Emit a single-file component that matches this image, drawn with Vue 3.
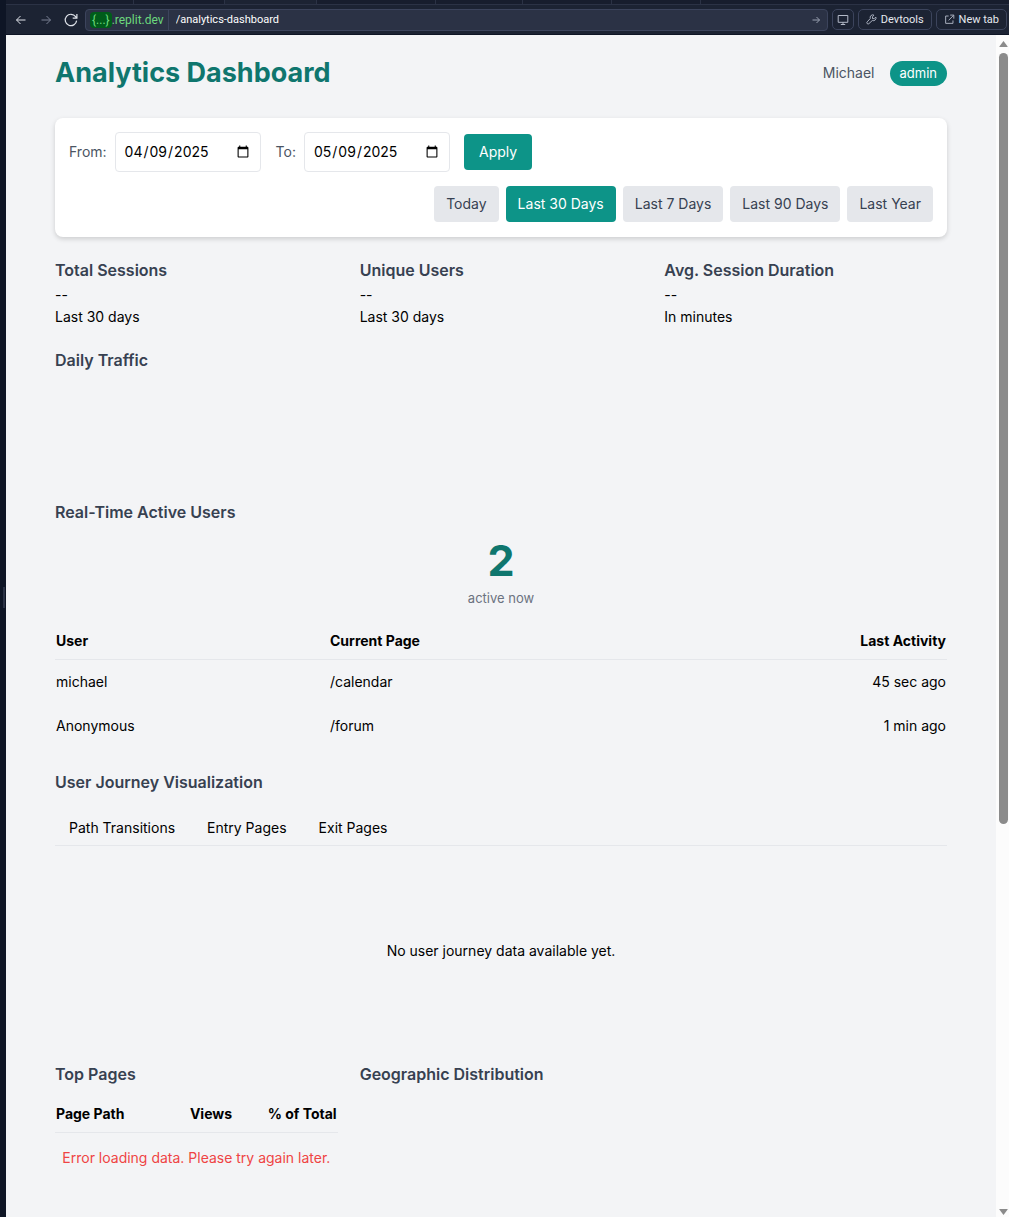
<script setup>
import { ref } from 'vue'

const from = ref('2025-04-09')
const to = ref('2025-05-09')
const ranges = ['Today', 'Last 30 Days', 'Last 7 Days', 'Last 90 Days', 'Last Year']
const activeRange = ref('Last 30 Days')
const stats = [
  { title: 'Total Sessions', value: '--', note: 'Last 30 days' },
  { title: 'Unique Users', value: '--', note: 'Last 30 days' },
  { title: 'Avg. Session Duration', value: '--', note: 'In minutes' }
]
const users = [
  { name: 'michael', page: '/calendar', last: '45 sec ago' },
  { name: 'Anonymous', page: '/forum', last: '1 min ago' }
]
const journeyTabs = ['Path Transitions', 'Entry Pages', 'Exit Pages']
const path = ref('/analytics-dashboard')
const browserTabs = [128, 91, 92, 119, 87, 89, 89]
</script>

<template>
  <div class="shell">
    <div class="rail"><span class="grip"></span></div>
    <div class="window">
      <div class="tabstrip">
        <i v-for="(w, n) in browserTabs" :key="n" :class="{ current: n === 2 }" :style="{ width: w + 'px' }"></i>
      </div>
      <div class="toolbar">
        <button class="nav" aria-label="Back">
          <svg width="12" height="12" viewBox="0 0 12 12"><path d="M10.5 6H1.5M5.5 2L1.5 6l4 4" /></svg>
        </button>
        <button class="nav dim" aria-label="Forward">
          <svg width="12" height="12" viewBox="0 0 12 12"><path d="M1.5 6h9M6.5 2l4 4-4 4" /></svg>
        </button>
        <button class="nav reload" aria-label="Reload">
          <svg width="14" height="14" viewBox="0 0 14 14"><path d="M12.6 7.6A5.7 5.7 0 1 1 11.6 3.7L12.8 5M12.9 1v4.2H8.7" /></svg>
        </button>
        <div class="address">
          <button class="host"><span class="chip">{...}</span>.replit.dev</button>
          <input v-model="path" class="path" aria-label="Path" />
          <button class="go" aria-label="Go">
            <svg width="8" height="8" viewBox="0 0 8 8"><path d="M.5 4h7M4.5 1l3 3-3 3" /></svg>
          </button>
        </div>
        <button class="tool" aria-label="Device size">
          <svg width="12" height="12" viewBox="0 0 12 12"><path d="M1.2 1.5h9.6v6.8H1.2zM6 8.3v2.2M3.8 10.5h4.4" /></svg>
        </button>
        <button class="tool">
          <svg width="11" height="11" viewBox="0 0 12 12"><path d="M8.6 1.2a2.9 2.9 0 0 0-3.9 3.7L1.3 8.6a1.3 1.3 0 0 0 1.9 1.9l3.7-3.4a2.9 2.9 0 0 0 3.8-3.8L9 5H7.1V3.1z" /></svg>
          Devtools
        </button>
        <button class="tool">
          <svg width="11" height="11" viewBox="0 0 12 12"><path d="M5 2.2H1.8v8h8V7M6.8 1.2h3.9v3.9M10.5 1.4L5 6.9" /></svg>
          New tab
        </button>
      </div>

      <div class="viewport">
        <main class="page">
          <header class="head">
            <h1>Analytics Dashboard</h1>
            <div class="account">
              <span class="who">Michael</span>
              <span class="role">admin</span>
            </div>
          </header>

          <form class="filters" @submit.prevent>
            <div class="dates">
              <label for="from">From:</label>
              <input id="from" v-model="from" type="date" />
              <label for="to" class="to">To:</label>
              <input id="to" v-model="to" type="date" />
              <button class="btn apply" type="submit">Apply</button>
            </div>
            <div class="ranges">
              <button
                v-for="r in ranges"
                :key="r"
                type="button"
                class="btn range"
                :class="{ active: r === activeRange }"
                @click="activeRange = r"
              >{{ r }}</button>
            </div>
          </form>

          <section class="thirds">
            <div v-for="s in stats" :key="s.title" class="stat">
              <h2>{{ s.title }}</h2>
              <p>{{ s.value }}</p>
              <p>{{ s.note }}</p>
            </div>
          </section>

          <section class="traffic">
            <h2>Daily Traffic</h2>
          </section>

          <section class="realtime">
            <h2>Real-Time Active Users</h2>
            <div class="count">2</div>
            <div class="caption">active now</div>
            <table class="users">
              <thead>
                <tr><th class="c-user">User</th><th>Current Page</th><th class="end">Last Activity</th></tr>
              </thead>
              <tbody>
                <tr v-for="u in users" :key="u.name">
                  <td>{{ u.name }}</td><td>{{ u.page }}</td><td class="end">{{ u.last }}</td>
                </tr>
              </tbody>
            </table>
          </section>

          <section class="journey">
            <h2>User Journey Visualization</h2>
            <nav class="tabs">
              <button v-for="t in journeyTabs" :key="t">{{ t }}</button>
            </nav>
            <div class="empty">No user journey data available yet.</div>
          </section>

          <section class="thirds">
            <div>
              <h2>Top Pages</h2>
              <table class="pages">
                <thead>
                  <tr><th class="c-path">Page Path</th><th class="c-views end">Views</th><th class="end">% of Total</th></tr>
                </thead>
                <tbody>
                  <tr><td colspan="3" class="error">Error loading data. Please try again later.</td></tr>
                </tbody>
              </table>
            </div>
            <div>
              <h2>Geographic Distribution</h2>
            </div>
          </section>
        </main>
        <div class="scrollbar" aria-hidden="true">
          <svg width="9" height="8" viewBox="0 0 9 8"><path d="M4.5 1L8.6 6.4Q8.8 7 8.2 7H.8Q.2 7 .4 6.4z" /></svg>
          <div class="track"><div class="thumb"></div></div>
          <svg width="9" height="8" viewBox="0 0 9 8"><path d="M4.5 7L8.6 1.6Q8.8 1 8.2 1H.8Q.2 1 .4 1.6z" /></svg>
        </div>
      </div>
    </div>
  </div>
</template>

<style>
body { margin: 0; background: #f3f4f6; }
</style>

<style scoped>
* { box-sizing: border-box; }
.shell {
  display: flex;
  min-height: 100vh;
  font: 14px/22px Inter, "Noto Sans", sans-serif;
  color: #000;
}
button, input { font: inherit; margin: 0; border: 0; padding: 0; }
button { cursor: pointer; }
h1, h2, p { margin: 0; }
.rail { flex: none; width: 6px; background: #0e1525; display: flex; align-items: center; justify-content: flex-end; padding-right: 1px; }
.grip { width: 2px; height: 21px; background: #2b3245; margin-top: -22px; }
.window { flex: 1; min-width: 0; display: flex; flex-direction: column; }

.tabstrip { height: 5px; background: #171d2d; border-bottom: 1px solid #2b3245; display: flex; overflow: hidden; }
.tabstrip i { flex: none; border-right: 1px solid #2b3245; }
.tabstrip .current { background: #1c2333; }
.toolbar {
  height: 30px;
  background: #1c2333;
  border-bottom: 1px solid #0e1525;
  display: flex;
  align-items: center;
  gap: 4px;
  padding: 0 2px 0 8px;
  font: 11px/14px Roboto, sans-serif;
  color: #f5f9fc;
}
.toolbar svg { flex: none; fill: none; stroke: currentColor; stroke-width: 1; }
.nav { width: 13px; height: 20px; margin-right: 8px; background: none; color: #dfe3ea; display: grid; place-items: center; }
.nav.dim { color: #7a8194; }
.nav.reload { margin-right: 4px; }
.nav.reload svg { stroke-width: 1.2; }
.address { flex: 1; min-width: 0; height: 22px; display: flex; align-items: center; background: #2b3245; border: 1px solid #3c445c; border-radius: 4px; padding-right: 7px; }
.host { height: 20px; background: none; color: #6cd97e; font: 12px/16px Roboto, sans-serif; padding: 0 4px; display: flex; align-items: center; border-right: 1px solid #3c445c; }
.chip { background: #005c1a; border-radius: 4px; padding: 0 2px; }
.path { flex: 1; min-width: 0; background: none; color: #fff; padding-left: 7px; outline: none; }
.go { background: none; color: #9aa1b2; display: grid; }
.tool { height: 21px; padding: 0 6px; border: 1px solid #3c445c; border-radius: 5px; background: #1c2333; color: #e6e9ef; display: flex; align-items: center; gap: 4px; white-space: nowrap; }
.tool svg { color: #b4bac8; }
.tool:not([aria-label]) { padding: 0 7px; }
.tool[aria-label] { padding: 0 4px; }

.viewport { flex: 1; display: flex; background: #f3f4f6; }
.page { flex: 1; min-width: 0; padding: 20px 49px 24px; }
.scrollbar { flex: none; width: 13px; background: #fcfcfc; display: flex; flex-direction: column; align-items: center; padding: 5px 0 1px 2px; gap: 5px; }
.scrollbar svg { fill: #8b8b8b; flex: none; }
.track { flex: 1; width: 9px; }
.thumb { height: 67%; background: #8b8b8b; border-radius: 5px; }

.head { display: flex; justify-content: space-between; align-items: center; height: 36px; margin-bottom: 27px; }
h1 { font-size: 27px; line-height: 36px; font-weight: 700; color: #0f766e; }
.account { display: flex; align-items: center; gap: 15px; }
.who { color: #4b5563; }
.role { background: #0d9488; color: #fff; border-radius: 13px; height: 25px; line-height: 25px; padding: 0 10px; font-size: 13px; }

.filters { background: #fff; border-radius: 8px; padding: 14px 14px 15px; box-shadow: 0 2px 5px rgba(0, 0, 0, 0.16); display: flex; flex-direction: column; gap: 14px; margin-bottom: 21px; }
.dates { display: flex; align-items: center; height: 40px; }
.dates label { color: #4b5563; margin-right: 8px; }
.dates .to { margin-left: 15px; }
.dates input { width: 146px; height: 40px; padding: 0 8px; border: 1px solid #e5e7eb; border-radius: 4px; background: #fff; color: #000; }
.btn { height: 36px; border-radius: 4px; padding: 0 12px; }
.apply { margin-left: 14px; padding: 0 15px; background: #0d9488; color: #fff; }
.ranges { display: flex; justify-content: flex-end; gap: 7px; }
.range { background: #e5e7eb; color: #374151; }
.range.active { background: #0d9488; color: #fff; }

h2 { font-size: 16px; line-height: 24px; font-weight: 600; color: #374151; }
.thirds { display: grid; grid-template-columns: repeat(3, 1fr); column-gap: 22px; }
.stat h2 { margin-bottom: 2px; }
.traffic { margin-top: 20px; height: 130px; }
.realtime { margin-top: 22px; }
.count { margin-top: 14px; font-size: 43px; line-height: 44px; font-weight: 700; color: #0f766e; text-align: center; }
.caption { font-size: 13px; line-height: 20px; margin-top: 6px; color: #6b7280; text-align: center; }
table { width: 100%; border-collapse: collapse; }
th, td { padding: 0 1px; height: 44px; text-align: left; }
td { padding-top: 2px; }
th { font-weight: 700; height: 36px; border-bottom: 1px solid #e5e7eb; }
.users { margin-top: 15px; }
.c-user { width: 274px; }
.c-path { width: 38%; }
.c-views { width: 25%; }
th.end, td.end { text-align: right; }
.journey { margin-top: 23px; }
.tabs { display: flex; gap: 4px; margin-top: 14px; height: 38px; border-bottom: 1px solid #e5e7eb; }
.tabs button { background: none; color: #000; padding: 2px 14px 0; }
.empty { height: 216px; padding-bottom: 6px; display: flex; align-items: center; justify-content: center; }
.pages { margin-top: 10px; }
.pages .error { text-align: center; color: #ef4444; height: 50px; }
</style>
